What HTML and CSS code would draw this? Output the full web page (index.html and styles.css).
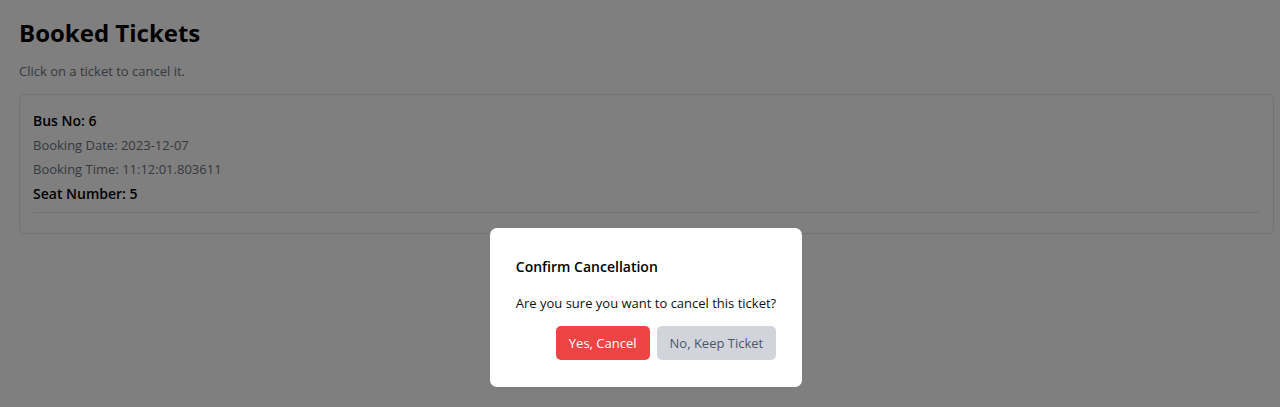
FILE: index.html
```html
<!DOCTYPE html>
<html lang="en">
<head>
<meta charset="utf-8">
<meta name="viewport" content="width=device-width, initial-scale=1">
<title>Booked Tickets</title>
<link rel="stylesheet" href="styles.css">
</head>
<body>
<main class="page">
  <h1 class="page-title">Booked Tickets</h1>
  <p class="page-hint">Click on a ticket to cancel it.</p>
  <ul class="ticket-list">
    <li class="ticket">
      <h2 class="ticket-heading">Bus No: 6</h2>
      <p class="ticket-detail">Booking Date: 2023-12-07</p>
      <p class="ticket-detail">Booking Time: 11:12:01.803611</p>
      <p class="ticket-heading">Seat Number: 5</p>
      <hr class="ticket-rule">
    </li>
  </ul>
</main>
<div class="overlay">
  <div class="dialog" role="dialog" aria-modal="true" aria-labelledby="dialog-title">
    <h2 class="dialog-title" id="dialog-title">Confirm Cancellation</h2>
    <p class="dialog-text">Are you sure you want to cancel this ticket?</p>
    <div class="dialog-actions">
      <button type="button" class="button button-danger">Yes, Cancel</button>
      <button type="button" class="button button-neutral">No, Keep Ticket</button>
    </div>
  </div>
</div>
</body>
</html>
```
FILE: styles.css
```css
* {
  box-sizing: border-box;
  margin: 0;
  padding: 0;
}

body {
  background: #fff;
  color: #000;
  font-family: "Segoe UI", "Open Sans", "Noto Sans", sans-serif;
  font-size: 13px;
  line-height: 24px;
}

.page {
  padding: 16px 6px 16px 19px;
}

.page-title {
  font-size: 24px;
  font-weight: 700;
  line-height: 34px;
  margin-bottom: 9px;
}

.page-hint {
  color: #6b7280;
  margin-bottom: 11px;
}

.ticket-list {
  list-style: none;
}

.ticket {
  border: 1px solid #e5e7eb;
  border-radius: 6px;
  padding: 13px 14px 20px 13px;
}

.ticket-heading {
  font-size: 14px;
  font-weight: 600;
  line-height: 25px;
}

.ticket-detail {
  color: #6b7280;
}

.ticket-rule {
  border: 0;
  border-top: 1px solid #e5e7eb;
  margin-top: 6px;
}

.overlay {
  position: fixed;
  inset: 0;
  display: flex;
  align-items: flex-end;
  justify-content: center;
  padding: 0 0 20px 12px;
  background: rgba(0, 0, 0, 0.5);
}

.dialog {
  background: #fff;
  border-radius: 7px;
  padding: 27px 26px;
}

.dialog-title {
  font-size: 14px;
  font-weight: 600;
  line-height: 24px;
  margin-bottom: 12px;
}

.dialog-text {
  color: #111;
  margin-bottom: 11px;
}

.dialog-actions {
  display: flex;
  justify-content: flex-end;
  gap: 7px;
}

.button {
  border: 0;
  border-radius: 5px;
  padding: 5px 13px;
  font: inherit;
  cursor: pointer;
}

.button-danger {
  background: #ef4444;
  color: #fff;
}

.button-neutral {
  background: #d1d5db;
  color: #4b5563;
}
```
